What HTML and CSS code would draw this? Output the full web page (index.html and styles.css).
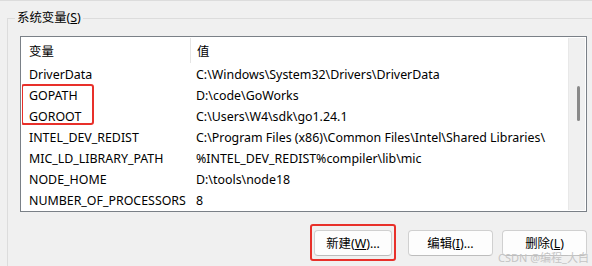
FILE: index.html
```html
<!DOCTYPE html>
<html lang="zh-CN">
<head>
<meta charset="utf-8">
<link rel="stylesheet" href="styles.css">
</head>
<body>
<div class="topline"></div>
<fieldset class="group">
  <legend class="group-title">系统变量(<u>S</u>)</legend>
  <div class="listbox">
    <div class="list-main">
      <div class="row head">
        <div class="c1">变量</div>
        <div class="c2">值</div>
      </div>
      <div class="row"><div class="c1">DriverData</div><div class="c2">C:\Windows\System32\Drivers\DriverData</div></div>
      <div class="row"><div class="c1">GOPATH</div><div class="c2">D:\code\GoWorks</div></div>
      <div class="row"><div class="c1">GOROOT</div><div class="c2">C:\Users\W4\sdk\go1.24.1</div></div>
      <div class="row"><div class="c1">INTEL_DEV_REDIST</div><div class="c2">C:\Program Files (x86)\Common Files\Intel\Shared Libraries\</div></div>
      <div class="row"><div class="c1">MIC_LD_LIBRARY_PATH</div><div class="c2">%INTEL_DEV_REDIST%compiler\lib\mic</div></div>
      <div class="row"><div class="c1">NODE_HOME</div><div class="c2">D:\tools\node18</div></div>
      <div class="row"><div class="c1">NUMBER_OF_PROCESSORS</div><div class="c2">8</div></div>
      <div class="mark mark-go"></div>
    </div>
    <div class="scrollbar"><div class="thumb"></div></div>
  </div>
  <div class="buttons">
    <div class="btn-wrap marked"><button class="btn btn-new">新建(<u>W</u>)...</button></div>
    <button class="btn">编辑(<u>I</u>)...</button>
    <button class="btn">删除(<u>L</u>)</button>
  </div>
</fieldset>
<div class="watermark">CSDN @编程_大白</div>
</body>
</html>
```
FILE: styles.css
```css
html, body {
  margin: 0;
  padding: 0;
}
body {
  width: 592px;
  height: 266px;
  overflow: hidden;
  background: #f0f0f0;
  font-family: "Noto Sans", "Noto Sans CJK SC", sans-serif;
  font-size: 12.4px;
  color: #000;
  position: relative;
}
.topline {
  height: 1px;
  background: #dcdcdc;
}
.group {
  margin: 9px 0 0 7px;
  padding: 0 6px 20px 12px;
  border: 1px solid #dcdcdc;
  border-right: none;
  border-bottom: none;
  min-width: 0;
}
.group-title {
  margin-left: -5px;
  padding: 0 2px;
  line-height: 16px;
  font-size: 12.4px;
}
.listbox {
  margin-top: 10px;
  width: 567px;
  height: 176px;
  box-sizing: border-box;
  border: 1px solid #7a8087;
  background: #fff;
  padding: 1px;
  display: flex;
}
.list-main {
  flex: 1;
  position: relative;
  overflow: hidden;
}
.row {
  display: flex;
  height: 21px;
  align-items: center;
  white-space: nowrap;
  padding-top: 1px;
  box-sizing: border-box;
}
.row.head {
  height: 25px;
  padding-top: 0;
}
.c1 {
  width: 168px;
  padding-left: 7px;
  box-sizing: border-box;
  flex: none;
}
.c2 {
  padding-left: 6px;
}
.head .c1 {
  align-self: stretch;
  display: flex;
  align-items: center;
  border-right: 1px solid #e5e5e5;
  width: 169px;
}
.head .c2 {
  padding-left: 6px;
}
.scrollbar {
  width: 16px;
  background: #f0f0f0;
  border-left: 1px solid #e8e8e8;
  position: relative;
}
.thumb {
  position: absolute;
  left: 8px;
  top: 48px;
  width: 3px;
  height: 35px;
  border-radius: 2px;
  background: #8a8a8a;
}
.mark {
  position: absolute;
  border: 2px solid #e8302a;
  border-radius: 3px;
}
.mark-go {
  left: -1px;
  top: 46px;
  width: 69px;
  height: 37px;
}
.buttons {
  display: flex;
  justify-content: flex-end;
  align-items: center;
  gap: 9px;
  margin-top: 18px;
  width: 567px;
}
.btn {
  width: 85px;
  height: 26px;
  box-sizing: border-box;
  border: 1px solid #d0d0d0;
  border-bottom-color: #bdbdbd;
  border-radius: 4px;
  background: #fdfdfd;
  font-family: inherit;
  font-size: 12.4px;
  color: #000;
  padding: 0;
}
.btn-new {
  width: 78px;
}
.btn-wrap {
  position: relative;
  margin-right: 7px;
}
.btn-wrap .btn {
  display: block;
}
.marked::after {
  content: "";
  position: absolute;
  left: -4px;
  right: -4px;
  top: -6px;
  bottom: -5px;
  border: 2px solid #e8302a;
  border-radius: 3px;
}
.watermark {
  position: absolute;
  right: 3px;
  bottom: 2px;
  font-size: 11px;
  color: #c4c4c4;
  line-height: 12px;
}
```
